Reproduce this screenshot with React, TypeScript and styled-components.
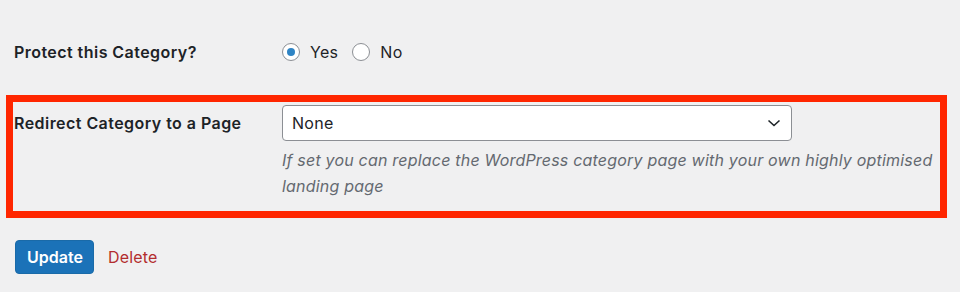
import React from 'react';
import styled, { createGlobalStyle } from 'styled-components';

const GlobalStyle = createGlobalStyle`
  html, body {
    margin: 0;
    padding: 0;
    background: #f0f0f1;
  }
  body {
    font-family: Inter, "Open Sans", "Liberation Sans", sans-serif;
    color: #1d2327;
  }
`;

const Page = styled.div`
  width: 941px;
  padding: 40px 0 0 6px;
`;

const Row = styled.div`
  display: grid;
  grid-template-columns: 268px 1fr;
  align-items: start;
  padding-left: 8px;
`;

const Highlight = styled.div`
  margin-top: 31px;
  border: 7px solid #ff2600;
  padding: 3px 0 12px 1px;
  display: grid;
  grid-template-columns: 268px 1fr;
  align-items: start;
`;

const Label = styled.div<{ $lineHeight?: number }>`
  font-size: 16px;
  font-weight: 600;
  letter-spacing: 0.45px;
  line-height: ${p => p.$lineHeight ?? 24}px;
`;

const RadioGroup = styled.div`
  display: flex;
  align-items: center;
  gap: 14px;
  height: 24px;
`;

const RadioOption = styled.label`
  display: flex;
  align-items: center;
  gap: 10px;
  font-size: 16px;
  letter-spacing: 0.3px;
`;

const RadioCircle = styled.span<{ $checked?: boolean }>`
  width: 18px;
  height: 18px;
  box-sizing: border-box;
  border: 1px solid #8c8f94;
  border-radius: 50%;
  background: #fff;
  display: flex;
  align-items: center;
  justify-content: center;

  &::after {
    content: '';
    width: 8px;
    height: 8px;
    border-radius: 50%;
    background: ${p => (p.$checked ? '#2f84c4' : 'transparent')};
  }
`;

const Field = styled.div`
  display: flex;
  flex-direction: column;
`;

const Select = styled.div`
  width: 510px;
  height: 36px;
  box-sizing: border-box;
  border: 1px solid #8c8f94;
  border-radius: 4px;
  background: #fff;
  display: flex;
  align-items: center;
  justify-content: space-between;
  padding: 0 10px 0 9px;
  font-size: 16px;
  letter-spacing: 0.3px;
`;

const Description = styled.p`
  margin: 6px 0 0;
  font-size: 16px;
  font-style: italic;
  letter-spacing: 0.2px;
  line-height: 26px;
  color: #646970;
  white-space: nowrap;
`;

const Actions = styled.div`
  display: flex;
  align-items: center;
  gap: 14px;
  margin-top: 22px;
  padding-left: 9px;
`;

const Button = styled.button`
  height: 34px;
  padding: 0 10px 0 11px;
  border: 1px solid #1a6aa8;
  border-radius: 4px;
  background: #1b72b8;
  color: #fff;
  font-family: inherit;
  font-size: 16px;
  font-weight: 600;
`;

const DeleteLink = styled.a`
  color: #b32d2e;
  font-size: 16px;
  letter-spacing: 0.2px;
  text-decoration: none;
`;

const Chevron = () => (
  <svg width="14" height="8" viewBox="0 0 14 8" fill="none">
    <path d="M1.5 1.5 L7 6.5 L12.5 1.5" stroke="#1d2327" strokeWidth="1.6" />
  </svg>
);

const App: React.FC = () => {
  return (
    <>
      <GlobalStyle />
      <Page>
        <Row>
          <Label>Protect this Category?</Label>
          <RadioGroup>
            <RadioOption>
              <RadioCircle $checked />
              Yes
            </RadioOption>
            <RadioOption>
              <RadioCircle />
              No
            </RadioOption>
          </RadioGroup>
        </Row>
        <Highlight>
          <Label $lineHeight={36}>Redirect Category to a Page</Label>
          <Field>
            <Select>
              <span>None</span>
              <Chevron />
            </Select>
            <Description>
              If set you can replace the WordPress category page with your own highly optimised
              <br />
              landing page
            </Description>
          </Field>
        </Highlight>
        <Actions>
          <Button>Update</Button>
          <DeleteLink href="#">Delete</DeleteLink>
        </Actions>
      </Page>
    </>
  );
};

export default App;
